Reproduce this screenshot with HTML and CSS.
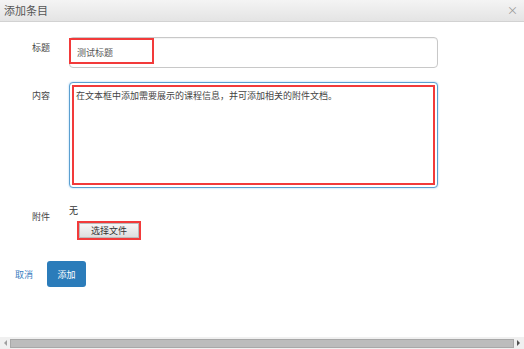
FILE: index.html
```html
<!DOCTYPE html>
<html lang="zh-CN">
<head>
  <meta charset="UTF-8" />
  <title>添加条目</title>
  <link rel="stylesheet" href="styles.css">
</head>
<body>
  <div class="dialog">
    <div class="dialog-header">
      <span class="dialog-title">添加条目</span>
      <span class="close">×</span>
    </div>

    <form class="dialog-body">
      <div class="row row-title">
        <label class="label">标题</label>
        <div class="field">
          <input type="text" class="input" value="测试标题" />
          <span class="mark mark-title"></span>
        </div>
      </div>

      <div class="row row-content">
        <label class="label">内容</label>
        <div class="field">
          <textarea class="textarea">在文本框中添加需要展示的课程信息，并可添加相关的附件文档。</textarea>
          <span class="mark mark-content"></span>
        </div>
      </div>

      <div class="row row-attach">
        <label class="label">附件</label>
        <div class="attach">
          <div class="none">无</div>
          <span class="file-wrap"><button type="button" class="file-btn">选择文件</button></span>
        </div>
      </div>

      <div class="actions">
        <a class="cancel">取消</a>
        <button type="button" class="submit">添加</button>
      </div>
    </form>

    <div class="hscroll">
      <span class="arrow arrow-left"></span>
      <span class="thumb"></span>
      <span class="arrow arrow-right"></span>
    </div>
  </div>
</body>
</html>
```

FILE: styles.css
```css
body {
  margin: 0;
  font-family: "Noto Sans CJK SC", "Liberation Sans", sans-serif;
  background: #fff;
  color: #333;
}

.dialog {
  width: 524px;
  height: 349px;
  display: flex;
  flex-direction: column;
  overflow: hidden;
}

.dialog-header {
  height: 21px;
  display: flex;
  align-items: center;
  justify-content: space-between;
  padding: 0 6px 0 4px;
  background: linear-gradient(#f4f4f4, #e4e4e4);
  border-bottom: 1px solid #d2d2d2;
}

.dialog-title {
  font-size: 11px;
  color: #555;
  line-height: 21px;
}

.close {
  font-size: 11px;
  color: #999;
  line-height: 21px;
}

.dialog-body {
  flex: 1;
  padding-top: 15px;
}

.row {
  display: flex;
}

.label {
  width: 37px;
  padding-left: 32px;
  font-size: 9px;
  line-height: 12px;
  color: #444;
}

.field {
  position: relative;
  width: 369px;
}

.row-title .label {
  padding-top: 5px;
}

.input {
  box-sizing: border-box;
  display: block;
  width: 369px;
  height: 31px;
  margin: 0;
  padding: 0 7px;
  border: 1px solid #c8c8c8;
  border-radius: 4px;
  font-family: inherit;
  font-size: 9px;
  color: #555;
  box-shadow: inset 0 1px 1px rgba(0,0,0,0.05);
}

.row-content {
  margin-top: 14px;
}

.row-content .label {
  padding-top: 8px;
}

.textarea {
  box-sizing: border-box;
  display: block;
  width: 369px;
  height: 106px;
  margin: 0;
  padding: 7px 6px;
  border: 1px solid #5b9fd0;
  border-radius: 4px;
  font-family: inherit;
  font-size: 9px;
  line-height: 12px;
  color: #444;
  resize: none;
  box-shadow: 0 0 2px rgba(82,168,236,0.6);
}

.mark {
  position: absolute;
  border: 2px solid #f23a3a;
  pointer-events: none;
}

.mark-title {
  left: 0;
  top: 1px;
  width: 81px;
  height: 22px;
}

.mark-content {
  left: 3px;
  top: 3px;
  right: 3px;
  bottom: 3px;
}

.row-attach {
  margin-top: 17px;
}

.row-attach .label {
  padding-top: 6px;
}

.attach {
  display: flex;
  flex-direction: column;
  align-items: flex-start;
}

.none {
  font-size: 9px;
  line-height: 12px;
  color: #333;
}

.file-wrap {
  margin: 4px 0 0 8px;
  border: 2px solid #f23a3a;
  display: inline-block;
}

.file-btn {
  display: block;
  width: 60px;
  height: 15px;
  padding: 0;
  border: 1px solid #bbb;
  background: linear-gradient(#f6f6f6, #dedede);
  font-family: inherit;
  font-size: 9px;
  color: #333;
  line-height: 13px;
}

.actions {
  display: flex;
  align-items: center;
  gap: 14px;
  margin-top: 21px;
  padding-left: 15px;
}

.cancel {
  font-size: 9px;
  color: #3a7dc0;
}

.submit {
  width: 39px;
  height: 26px;
  padding: 0;
  border: none;
  border-radius: 3px;
  background: #2b7cba;
  color: #fff;
  font-family: inherit;
  font-size: 9px;
}

.hscroll {
  height: 12px;
  display: flex;
  align-items: center;
  background: #f0f0f0;
  padding: 0 4px;
  gap: 3px;
}

.thumb {
  flex: 1;
  height: 9px;
  box-sizing: border-box;
  background: #bcbcbc;
  border: 1px solid #a8a8a8;
}

.arrow {
  width: 0;
  height: 0;
  border-top: 3px solid transparent;
  border-bottom: 3px solid transparent;
}

.arrow-left {
  border-right: 3px solid #a0a0a0;
}

.arrow-right {
  border-left: 3px solid #505050;
}
```
